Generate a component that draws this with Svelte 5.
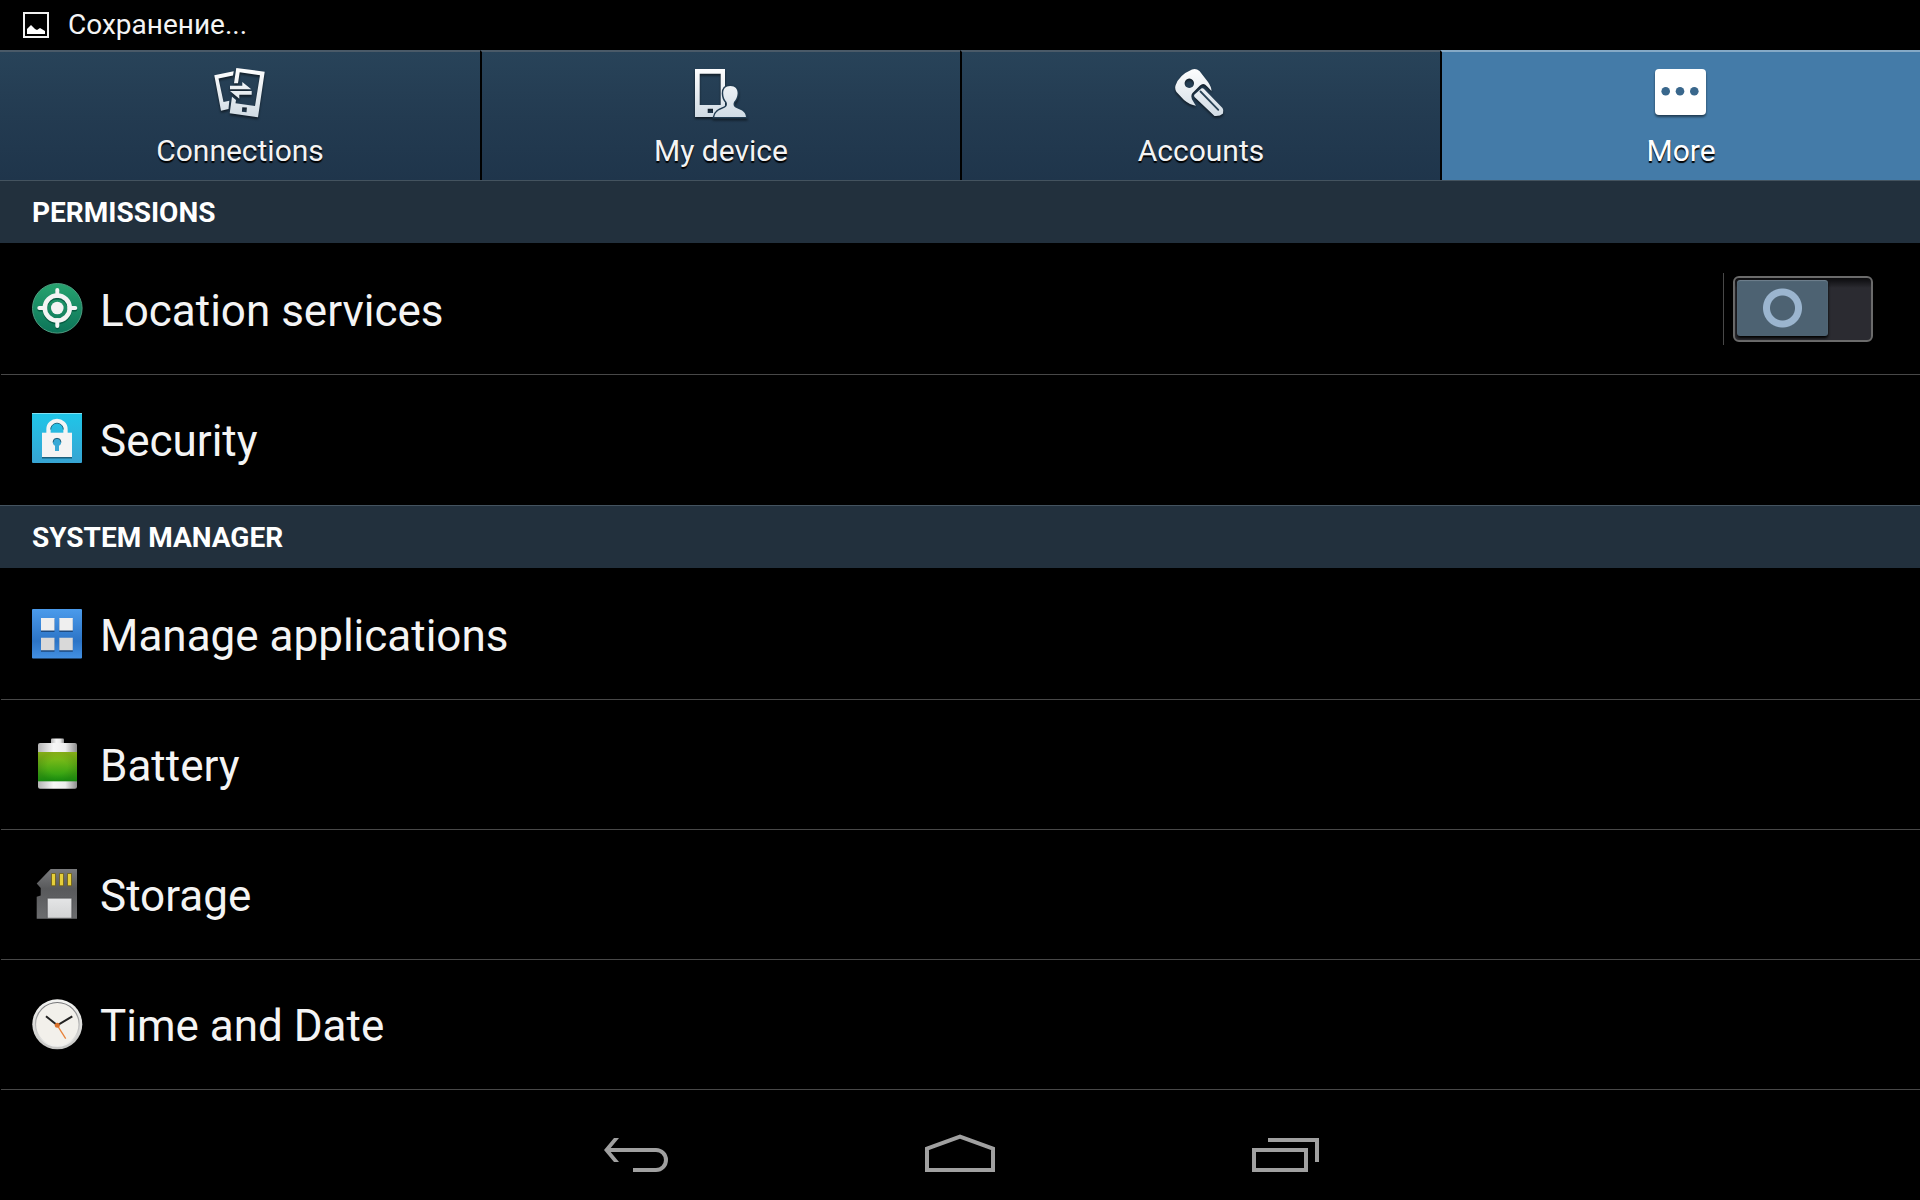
<script lang="ts">
	type Item = { id: string; title: string; toggle?: boolean };
	type Section = { title: string; items: Item[] };

	const tabs = [
		{ id: 'connections', title: 'Connections' },
		{ id: 'device', title: 'My device' },
		{ id: 'accounts', title: 'Accounts' },
		{ id: 'more', title: 'More' }
	];

	const sections: Section[] = [
		{
			title: 'Permissions',
			items: [
				{ id: 'location', title: 'Location services', toggle: true },
				{ id: 'security', title: 'Security' }
			]
		},
		{
			title: 'System manager',
			items: [
				{ id: 'apps', title: 'Manage applications' },
				{ id: 'battery', title: 'Battery' },
				{ id: 'storage', title: 'Storage' },
				{ id: 'clock', title: 'Time and Date' }
			]
		}
	];

	let activeTab = $state('more');
	let locationOn = $state(false);
</script>

{#snippet tabIcon(id: string)}
	<svg class="tab-icon" viewBox="0 0 52 52" aria-hidden="true">
		<defs>
			<linearGradient id="silver-{id}" x1="0" y1="0" x2="0" y2="52" gradientUnits="userSpaceOnUse">
				<stop offset="0" stop-color="#ffffff" />
				<stop offset="1" stop-color="#cfdae3" />
			</linearGradient>
		</defs>
		{#if id === 'connections'}
			<g fill="url(#silver-{id})">
				<path d="M.3 8.3 19.7 4.3 19 8.5 4.5 11.5 9.5 35l5.8-1.3L14.5 42 7 43.7z" />
				<path
					fill-rule="evenodd"
					d="M22.3 1 50.7 4.7 44 50.3 15.7 46.3 18 29.7 22 33 21.5 36.3 41 39 46 8.3 25.7 5.3 24 16.3H20zM28.3 40.2l-.4 4.6 4.6.4.4-4.6z"
				/>
				<path d="M16 18.7H28.3V15L37.3 22.3H16z" />
				<path d="M37.7 24v3.7H25.3v4L16 24z" />
			</g>
		{:else if id === 'device'}
			<path
				fill="url(#silver-{id})"
				fill-rule="evenodd"
				d="M0 2H30V50H0zM4.7 6.7V38H25.7V6.7zM12.7 41.7V46H18V41.7z"
			/>
			<path
				fill="url(#silver-{id})"
				stroke="#223c51"
				stroke-width="3"
				paint-order="stroke"
				d="M35.3 19c-5 0-7.3 3-7.1 7.5.1 3.5 1.3 6.5 3.3 8.5 1 2.5.5 4.500-1.500 5.500-4 2-9.500 3-10.700 9.500H51c-.5-6.500-6.500-7.500-10.500-9.500-2-1-2.500-3-1.500-5.500 2-2 3.400-5 3.600-8.500.2-4.500-2.300-7.500-7.300-7.500z"
			/>
		{:else if id === 'accounts'}
			<path
				fill="url(#silver-{id})"
				fill-rule="evenodd"
				d="M17 2.5Q21 1 24.5 4L33 15Q36.5 20 36.5 24 33 20 30 17.5 27.5 16 25 18.5L17.5 26Q15 29 18 34 19 36 21 38.7 15 38 9 33L1.5 25Q-.5 22 .5 18.5 4 8 17 2.5zM14.3 11.6a4.7 4.7 0 1 0 .01 0z"
			/>
			<path
				fill="url(#silver-{id})"
				d="M26.7 21.3Q28 20.8 29 22L47.5 41Q49 43 48 46.5 45 49.5 39.5 49L19.5 30Q18.5 28.7 19.5 27.5z"
			/>
			<path d="M25.5 24.5 43.3 42.8" stroke="#2a4356" stroke-width="1.8" stroke-linecap="round" />
		{:else}
			<rect y="2" width="51" height="46" rx="4" fill="#fff" />
			<g fill="#39678c">
				<circle cx="10.7" cy="24.3" r="4.3" />
				<circle cx="25" cy="24.3" r="4.3" />
				<circle cx="39.3" cy="24.3" r="4.3" />
			</g>
		{/if}
	</svg>
{/snippet}

{#snippet itemIcon(id: string)}
	<svg class="item-icon" viewBox="0 0 52 52" aria-hidden="true">
		{#if id === 'location'}
			<defs>
				<linearGradient id="green" x1="0" y1="0" x2="0" y2="1">
					<stop offset="0" stop-color="#27a36f" />
					<stop offset="1" stop-color="#0c7459" />
				</linearGradient>
			</defs>
			<circle cx="25.3" cy="25.3" r="24.8" fill="url(#green)" stroke="#4f9c80" />
			<g transform="translate(0 1.5)" stroke="#075c43" fill="none">
				<circle cx="25.3" cy="25" r="12.5" stroke-width="4.5" />
				<path d="M25.3 7v6M25.3 37v6M7.3 25h6M37.3 25h6" stroke-width="4" stroke-linecap="round" />
			</g>
			<g stroke="#f4f4f4" fill="none">
				<circle cx="25.3" cy="25" r="12.5" stroke-width="4.5" />
				<path d="M25.3 7v6M25.3 37v6M7.3 25h6M37.3 25h6" stroke-width="4" stroke-linecap="round" />
			</g>
			<circle cx="25.3" cy="25" r="6.3" fill="#f4f4f4" />
		{:else if id === 'security'}
			<defs>
				<linearGradient id="cyan" x1="0" y1="0" x2="0" y2="1">
					<stop offset="0" stop-color="#1fc6e8" />
					<stop offset="1" stop-color="#37a4d3" />
				</linearGradient>
			</defs>
			<rect width="50" height="50" rx="1" fill="url(#cyan)" />
			<path d="M0 .5H50" stroke="#7fe0f2" />
			<path d="M10 44H40v1.5H10z" fill="#1b5f7c" />
			<path d="M16.5 21V16a8.5 8 0 0 1 17 0v5" fill="none" stroke="#f4f4f4" stroke-width="4.3" />
			<path d="M18.7 16.5a6.3 6.3 0 0 1 12.6 0" fill="none" stroke="#1d6d86" />
			<rect x="10" y="19.7" width="30" height="24.3" fill="#f4f4f4" />
			<path d="M25 25.3a4 4 0 0 1 2 7.5V38h-4V32.8a4 4 0 0 1 2-7.5z" fill="#39a9d6" />
			<path d="M21 29.3a4 4 0 0 1 8 0" fill="none" stroke="#1d5d78" />
		{:else if id === 'apps'}
			<defs>
				<linearGradient id="blue" x1="0" y1="0" x2="0" y2="1">
					<stop offset="0" stop-color="#4b9beb" />
					<stop offset=".65" stop-color="#2c74c6" />
					<stop offset="1" stop-color="#4390e2" />
				</linearGradient>
			</defs>
			<rect y="1" width="50" height="49.5" rx="1" fill="url(#blue)" />
			<path d="M9 11H22.5V24H9zM27.3 11H40.8V24H27.3zM9 30.5H22.5V43.7H9zM27.3 30.5H40.8V43.7H27.3z" fill="#1c4a80" />
			<path d="M9 10H22.5V22.5H9zM27.3 10H40.8V22.5H27.3z" fill="#efefef" />
			<path d="M9 29.7H22.5V42.2H9zM27.3 29.7H40.8V42.2H27.3z" fill="#d9d9d9" />
		{:else if id === 'battery'}
			<defs>
				<linearGradient id="steel">
					<stop offset="0" stop-color="#b4b4b4" />
					<stop offset=".4" stop-color="#f7f7f7" />
					<stop offset=".7" stop-color="#ededed" />
					<stop offset="1" stop-color="#8d8d8d" />
				</linearGradient>
				<linearGradient id="charge" x1="0" y1="0" x2="0" y2="1">
					<stop offset="0" stop-color="#97c31a" />
					<stop offset="1" stop-color="#199a10" />
				</linearGradient>
				<radialGradient id="shade">
					<stop offset=".5" stop-color="#000" stop-opacity="0" />
					<stop offset="1" stop-color="#000" stop-opacity=".12" />
				</radialGradient>
			</defs>
			<rect x="19" y=".5" width="13" height="6" rx="1" fill="url(#steel)" />
			<rect x="6" y="5" width="39" height="45.7" rx="2" fill="url(#steel)" />
			<rect x="6" y="14" width="39" height="29.3" fill="url(#charge)" />
			<rect x="6" y="14" width="39" height="29.3" fill="url(#shade)" />
		{:else if id === 'storage'}
			<defs>
				<linearGradient id="card" x1="0" y1="0" x2="0" y2="1">
					<stop offset="0" stop-color="#7a7b7d" />
					<stop offset=".4" stop-color="#58595b" />
					<stop offset="1" stop-color="#6c6d6f" />
				</linearGradient>
				<linearGradient id="paper" x1="0" y1="0" x2="0" y2="1">
					<stop offset="0" stop-color="#e4e5e6" />
					<stop offset="1" stop-color="#d2d3d4" />
				</linearGradient>
			</defs>
			<path d="M18.7 1H45V50.7H4.7V28.7l4-1.2V20l-4-4.5z" fill="url(#card)" />
			<path
				d="M19.5 5.5h4v12.3h-4zM27.5 5.5h4v12.3h-4zM35.5 5.5h4v12.3h-4z"
				fill="#e6cf3a"
				stroke="#6b5a14"
				stroke-width=".8"
			/>
			<path d="M15.3 30.2H39.8V50.2H15.3z" fill="url(#paper)" stroke="#46474a" stroke-width=".6" />
		{:else}
			<defs>
				<linearGradient id="rim" x1="0" y1="0" x2="0" y2="1">
					<stop offset="0" stop-color="#f4f4f2" />
					<stop offset="1" stop-color="#c6c6c4" />
				</linearGradient>
				<linearGradient id="bezel" x1="0" y1="0" x2="0" y2="1">
					<stop offset="0" stop-color="#77777a" />
					<stop offset="1" stop-color="#f2f2f0" />
				</linearGradient>
			</defs>
			<circle cx="25.3" cy="26.3" r="25" fill="url(#rim)" />
			<circle cx="25.3" cy="26.3" r="21.8" fill="#f2f0eb" stroke="url(#bezel)" stroke-width="1.2" />
			<path d="M14 18.3 25.3 27.3 40.3 18.3" fill="none" stroke="#222" stroke-width="2" />
			<path d="M25.3 27.3 33.7 40.7" stroke="#e8823a" stroke-width="1.3" />
			<circle cx="25.3" cy="27.3" r="2.5" fill="#d9702a" />
		{/if}
	</svg>
{/snippet}

<div class="screen">
	<header class="status">
		<svg viewBox="0 0 26 26" aria-hidden="true">
			<rect x="1" y="1" width="24" height="24" fill="none" stroke="#f2f2f2" stroke-width="2" />
			<path d="M4 22V17L8 13l4 4 2 1 3-2 5 3v3z" fill="#fff" />
		</svg>
		<span>Сохранение...</span>
	</header>

	<nav class="tabs">
		{#each tabs as tab (tab.id)}
			<button class="tab" class:active={activeTab === tab.id} onclick={() => (activeTab = tab.id)}>
				{@render tabIcon(tab.id)}
				<span>{tab.title}</span>
			</button>
		{/each}
	</nav>

	<main>
		{#each sections as section (section.title)}
			<section>
				<h2>{section.title}</h2>
				<ul>
					{#each section.items as item (item.id)}
						<li>
							{#if item.toggle}
								<label class="item" for="switch-{item.id}">
									{@render itemIcon(item.id)}
									<span>{item.title}</span>
								</label>
								<div class="switch-cell">
									<input class="switch" id="switch-{item.id}" type="checkbox" bind:checked={locationOn} />
								</div>
							{:else}
								<button class="item">
									{@render itemIcon(item.id)}
									<span>{item.title}</span>
								</button>
							{/if}
						</li>
					{/each}
				</ul>
			</section>
		{/each}
	</main>

	<footer class="navbar">
		<button aria-label="Back">
			<svg viewBox="0 0 72 40">
				<path d="M4 18 14 6h5L9 18 19 30h-5z" fill="#a0a0a0" />
				<path d="M7 18H56a10 10 0 0 1 0 20H33" />
			</svg>
		</button>
		<button aria-label="Home">
			<svg viewBox="0 0 72 40">
				<path d="M3 16.7 36 4.7 69 16.7V38H3z" />
			</svg>
		</button>
		<button aria-label="Recent apps">
			<svg viewBox="0 0 72 40">
				<path d="M6 18H58V38H6zM20 8H69V30" />
			</svg>
		</button>
	</footer>
</div>

<style>
	:global(body) {
		background: #000;
	}
	.screen {
		min-height: 100vh;
		display: flex;
		flex-direction: column;
		background: #000;
		color: #f4f4f4;
		font-family: Roboto, 'Noto Sans', sans-serif;
	}
	button {
		margin: 0;
		padding: 0;
		border: 0;
		background: none;
		color: inherit;
		font: inherit;
		cursor: pointer;
	}
	.status {
		height: 50px;
		padding: 0 23px;
		display: flex;
		align-items: center;
		gap: 19px;
		font-size: 28px;
		line-height: 32px;
	}
	.status svg {
		width: 26px;
		height: 26px;
	}
	.tabs {
		display: grid;
		grid-template-columns: repeat(4, 1fr);
	}
	.tab {
		height: 130px;
		padding-top: 15px;
		display: flex;
		flex-direction: column;
		align-items: center;
		gap: 14px;
		border-top: 2px solid #4a5a68;
		background: linear-gradient(#284359, #233b51 50%, #1f354b);
		font-size: 30px;
		line-height: 36px;
		text-shadow: 0 2px 1px #000;
	}
	.tab + .tab {
		border-left: 2px solid #000;
	}
	.tab.active {
		border-top-color: #85a9c6;
		background: #447ba8;
		color: #fff;
	}
	.tab-icon {
		width: 52px;
		height: 52px;
		overflow: visible;
		filter: drop-shadow(0 2px 1px rgba(0, 0, 0, 0.5));
	}
	h2 {
		margin: 0;
		height: 62px;
		padding: 0 32px;
		border-top: 1px solid #44535f;
		border-bottom: 2px solid #000;
		background: #22303d;
		color: #fff;
		font-size: 28px;
		font-weight: 700;
		line-height: 64px;
		text-transform: uppercase;
	}
	ul {
		margin: 0;
		padding: 0;
		list-style: none;
	}
	li {
		height: 129px;
		margin-left: 1px;
		display: flex;
		border-bottom: 1px solid #484848;
	}
	section:not(:last-child) li:last-child {
		border-bottom-color: #000;
	}
	.item {
		flex: 1;
		padding: 38px 31px 0;
		display: flex;
		align-items: flex-start;
		gap: 16px;
		font-size: 44px;
		line-height: 56px;
		text-align: left;
		cursor: pointer;
	}
	.item-icon {
		width: 52px;
		height: 52px;
		flex: none;
	}
	.switch-cell {
		height: 72px;
		margin: 28px 47px 0 0;
		padding-left: 9px;
		display: flex;
		align-items: center;
		border-left: 1px solid #484848;
	}
	.switch {
		appearance: none;
		box-sizing: border-box;
		width: 140px;
		height: 66px;
		margin: 0;
		padding: 2px 2px 4px;
		display: flex;
		border: 2px solid #6b6b6b;
		border-radius: 6px;
		background: linear-gradient(#0b0b0d, #2b2b31 16%, #2b2b31);
		cursor: pointer;
	}
	.switch::before {
		content: '';
		width: 91px;
		border-radius: 3px;
		background: radial-gradient(circle, transparent 12px, #9bb5cf 13px, #9bb5cf 19px, transparent 20px), #4d6272;
		box-shadow:
			0 2px 3px #000,
			inset 0 1px 1px #70818e;
	}
	.switch:checked {
		justify-content: flex-end;
	}
	.navbar {
		height: 96px;
		margin-top: auto;
		display: flex;
		justify-content: center;
	}
	.navbar button {
		width: 324px;
		display: flex;
		align-items: center;
		justify-content: center;
	}
	.navbar svg {
		width: 72px;
		height: 40px;
		fill: none;
		stroke: none;
	}
	.navbar path:not([fill]) {
		stroke: #a0a0a0;
		stroke-width: 4;
	}
</style>
